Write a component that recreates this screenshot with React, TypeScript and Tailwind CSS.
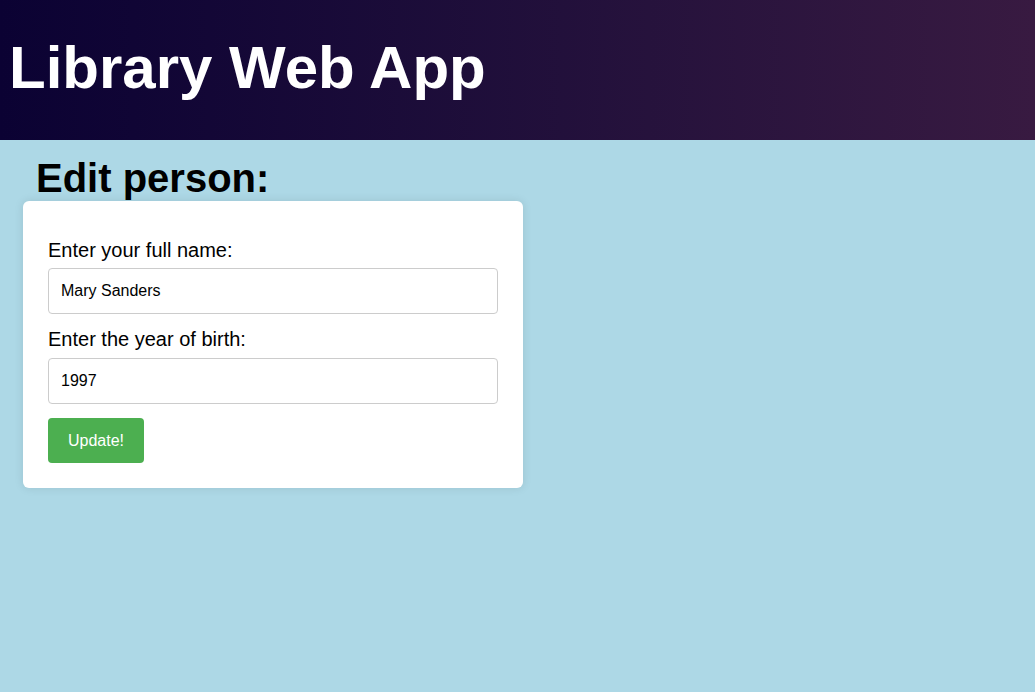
export default function App() {
  return (
    <div className="min-h-[692px] bg-[#add8e6] font-['Liberation_Sans',Arial,sans-serif] text-black">
      <header className="h-[140px] flex items-center px-[9px] bg-gradient-to-r from-[#0b0233] to-[#381a41]">
        <h1 className="text-[60px] font-bold text-white leading-none -mt-[5px]">Library Web App</h1>
      </header>

      <main className="px-[23px]">
        <h2 className="text-[40px] font-bold leading-none pl-[13px] pt-[18px] pb-[3px]">Edit person:</h2>

        <form className="w-[500px] bg-white rounded-[6px] shadow-[0_0_10px_rgba(0,0,0,0.1)] px-[25px] pt-[38px] pb-[25px]">
          <label className="block text-[20px] leading-[22px] mb-[7px]">Enter your full name:</label>
          <input
            type="text"
            defaultValue="Mary Sanders"
            className="block w-full h-[46px] px-[12px] text-[16px] border border-[#ccc] rounded-[4px] outline-none"
          />
          <label className="block text-[20px] leading-[22px] mt-[14px] mb-[8px]">Enter the year of birth:</label>
          <input
            type="text"
            defaultValue="1997"
            className="block w-full h-[46px] px-[12px] text-[16px] border border-[#ccc] rounded-[4px] outline-none"
          />
          <button
            type="button"
            className="mt-[14px] h-[45px] w-[96px] bg-[#4caf50] text-white text-[16px] rounded-[4px]"
          >
            Update!
          </button>
        </form>
      </main>
    </div>
  )
}
